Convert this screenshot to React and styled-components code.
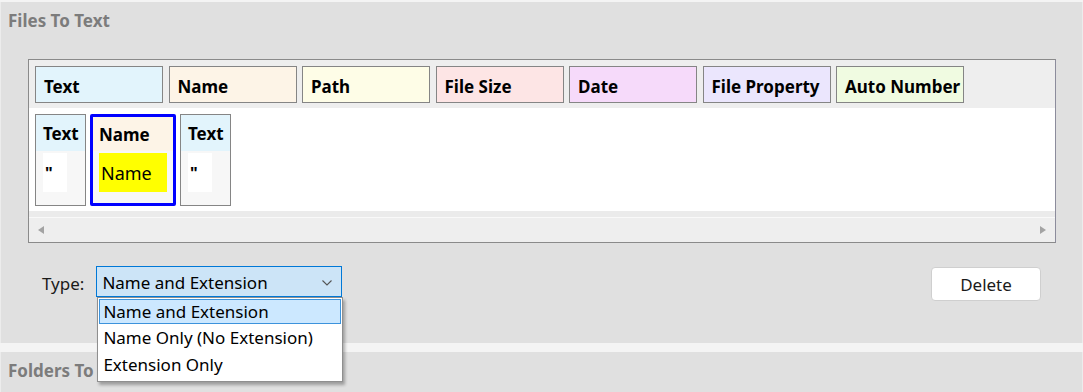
import React from "react";
import styled, { createGlobalStyle } from "styled-components";

const GlobalStyle = createGlobalStyle`
    html, body {
        margin: 0;
        padding: 0;
        background: #f4f4f4;
        font-family: "Noto Sans", "Open Sans", sans-serif;
        overflow: hidden;
    }
`;

const Page = styled.div`
    display: flex;
    flex-direction: column;
    gap: 9px;
    padding-top: 2px;
    height: 392px;
    box-sizing: border-box;
`;

const Group = styled.section`
    background: #e0e0e0;
    height: ${(p) => p.height}px;
    flex-shrink: 0;
    box-sizing: border-box;
    border-left: 1px solid #ececec;
    border-right: 1px solid #ececec;
`;

const GroupTitle = styled.div`
    padding: 7px 0 0 7px;
    height: 24px;
    line-height: 24px;
    font-size: 17px;
    font-weight: 700;
    color: #7c7c7c;
`;

const ListBox = styled.div`
    margin: 26px 0 0 27px;
    width: 1028px;
    height: 184px;
    box-sizing: border-box;
    border: 1px solid #8a8a8a;
    border-right-color: #8c8c9c;
    background: #eeeeee;
    display: flex;
    flex-direction: column;
`;

const HeaderStrip = styled.div`
    display: flex;
    gap: 5.5px;
    height: 48px;
    box-sizing: border-box;
    padding: 6px 6px;
`;

const HeaderTile = styled.div`
    width: 128px;
    height: 37px;
    box-sizing: border-box;
    border: 1px solid #858585;
    background: ${(p) => p.bg};
    display: flex;
    align-items: center;
    padding: 3px 0 0 8px;
    font-size: 17px;
    font-weight: 700;
    color: #000;
    white-space: nowrap;
`;

const WhiteArea = styled.div`
    background: #ffffff;
    height: 103px;
    box-sizing: border-box;
    padding: 6px 6px;
    display: flex;
    gap: 4px;
`;

const Item = styled.div`
    height: 92px;
    box-sizing: border-box;
    border: ${(p) => (p.selected ? "3px solid #0000ff" : "1px solid #858585")};
    border-radius: ${(p) => (p.selected ? "2px" : "0")};
    background: #f7f7f7;
    display: flex;
    flex-direction: column;
`;

const ItemHead = styled.div`
    height: ${(p) => (p.selected ? 34 : 36)}px;
    background: ${(p) => p.bg};
    display: flex;
    align-items: center;
    padding: 1px 6px 0 ${(p) => (p.selected ? 6 : 7)}px;
    box-sizing: border-box;
    font-size: 17px;
    font-weight: 700;
    white-space: nowrap;
`;

const ItemBody = styled.div`
    flex: 1;
    padding: 2px 0 0 ${(p) => (p.selected ? 6 : 7)}px;
`;

const ValueBox = styled.div`
    width: ${(p) => p.width}px;
    height: 39px;
    background: ${(p) => p.bg};
    display: flex;
    align-items: center;
    padding-left: 2px;
    box-sizing: border-box;
    font-size: ${(p) => (p.big ? 18 : 16)}px;
    font-weight: ${(p) => (p.big ? 400 : 700)};
    color: #000;
`;

const Gutter = styled.div`
    height: 6px;
    background: #ebebeb;
    border-bottom: 1px solid #f9f9f9;
`;

const ScrollBar = styled.div`
    height: 24px;
    background: #eeeeee;
    display: flex;
    align-items: center;
    justify-content: space-between;
    padding: 0 9px;
`;

const Arrow = styled.span`
    width: 0;
    height: 0;
    border-top: 4px solid transparent;
    border-bottom: 4px solid transparent;
    ${(p) => (p.dir === "left" ? "border-right" : "border-left")}: 6px solid #a3a3a3;
`;

const Controls = styled.div`
    display: flex;
    align-items: flex-start;
    margin-top: 23px;
    padding-left: 41px;
    width: 1040px;
    box-sizing: border-box;
`;

const Label = styled.span`
    font-size: 17px;
    color: #1a1a1a;
    line-height: 31px;
    padding-top: 2px;
    margin-right: 12px;
`;

const ComboWrap = styled.div`
    position: relative;
`;

const Combo = styled.div`
    width: 246px;
    height: 31px;
    box-sizing: border-box;
    background: #cce4f7;
    border: 1px solid #0078d7;
    display: flex;
    align-items: center;
    justify-content: space-between;
    padding: 2px 8px 0 5px;
    font-size: 17px;
    color: #000;
`;

const DropList = styled.div`
    position: absolute;
    top: 31px;
    left: 1px;
    width: 246px;
    box-sizing: border-box;
    background: #ffffff;
    border: 1px solid #8f8f8f;
    box-shadow: 2px 3px 3px rgba(0, 0, 0, 0.3);
    padding: 1px 1px 3px;
    z-index: 5;
`;

const Option = styled.div`
    height: ${(p) => (p.active ? 25 : 27)}px;
    box-sizing: border-box;
    display: flex;
    align-items: center;
    padding-left: ${(p) => (p.active ? 3 : 4)}px;
    font-size: 17px;
    color: #000;
    background: ${(p) => (p.active ? "#cce8ff" : "transparent")};
    border: ${(p) => (p.active ? "1px solid #3c93dc" : "none")};
    white-space: nowrap;
`;

const Spacer = styled.div`
    flex: 1;
`;

const Button = styled.button`
    width: 110px;
    height: 34px;
    margin-top: 1px;
    background: #ffffff;
    border: 1px solid #cfcfcf;
    border-radius: 4px;
    font-family: inherit;
    font-size: 17px;
    color: #1a1a1a;
    padding: 0;
`;

const Chevron = () => (
    <svg width="12" height="8" viewBox="0 0 12 8">
        <path d="M1.5 1.5 L6 6 L10.5 1.5" fill="none" stroke="#555" strokeWidth="1.1" />
    </svg>
);

const headers = [
    { label: "Text", bg: "#e2f4fc" },
    { label: "Name", bg: "#fdf4e7" },
    { label: "Path", bg: "#fefde7" },
    { label: "File Size", bg: "#fde5e5" },
    { label: "Date", bg: "#f6dafa" },
    { label: "File Property", bg: "#ebe6fd" },
    { label: "Auto Number", bg: "#f0fbe1" },
];

const items = [
    { label: "Text", bg: "#e2f4fc", value: '"', width: 51 },
    { label: "Name", bg: "#fdf4e7", value: "Name", width: 86, selected: true },
    { label: "Text", bg: "#e2f4fc", value: '"', width: 51 },
];

const options = ["Name and Extension", "Name Only (No Extension)", "Extension Only"];

const App = () => {
    return (
        <>
            <GlobalStyle />
            <Page>
                <Group height={341}>
                    <GroupTitle>Files To Text</GroupTitle>
                    <ListBox>
                        <HeaderStrip>
                            {headers.map((h) => (
                                <HeaderTile key={h.label} bg={h.bg}>{h.label}</HeaderTile>
                            ))}
                        </HeaderStrip>
                        <WhiteArea>
                            {items.map((it, i) => (
                                <Item key={i} selected={it.selected} style={{ width: it.width }}>
                                    <ItemHead bg={it.bg} selected={it.selected}>{it.label}</ItemHead>
                                    <ItemBody selected={it.selected}>
                                        {it.selected ? (
                                            <ValueBox width={68} bg="#ffff00" big>{it.value}</ValueBox>
                                        ) : (
                                            <ValueBox width={24} bg="#ffffff">{it.value}</ValueBox>
                                        )}
                                    </ItemBody>
                                </Item>
                            ))}
                        </WhiteArea>
                        <Gutter />
                        <ScrollBar>
                            <Arrow dir="left" />
                            <Arrow dir="right" />
                        </ScrollBar>
                    </ListBox>
                    <Controls>
                        <Label>Type:</Label>
                        <ComboWrap>
                            <Combo>
                                <span>Name and Extension</span>
                                <Chevron />
                            </Combo>
                            <DropList>
                                {options.map((o, i) => (
                                    <Option key={o} active={i === 0}>{o}</Option>
                                ))}
                            </DropList>
                        </ComboWrap>
                        <Spacer />
                        <Button>Delete</Button>
                    </Controls>
                </Group>
                <Group height={40}>
                    <GroupTitle>Folders To Text</GroupTitle>
                </Group>
            </Page>
        </>
    );
};

export default App;
